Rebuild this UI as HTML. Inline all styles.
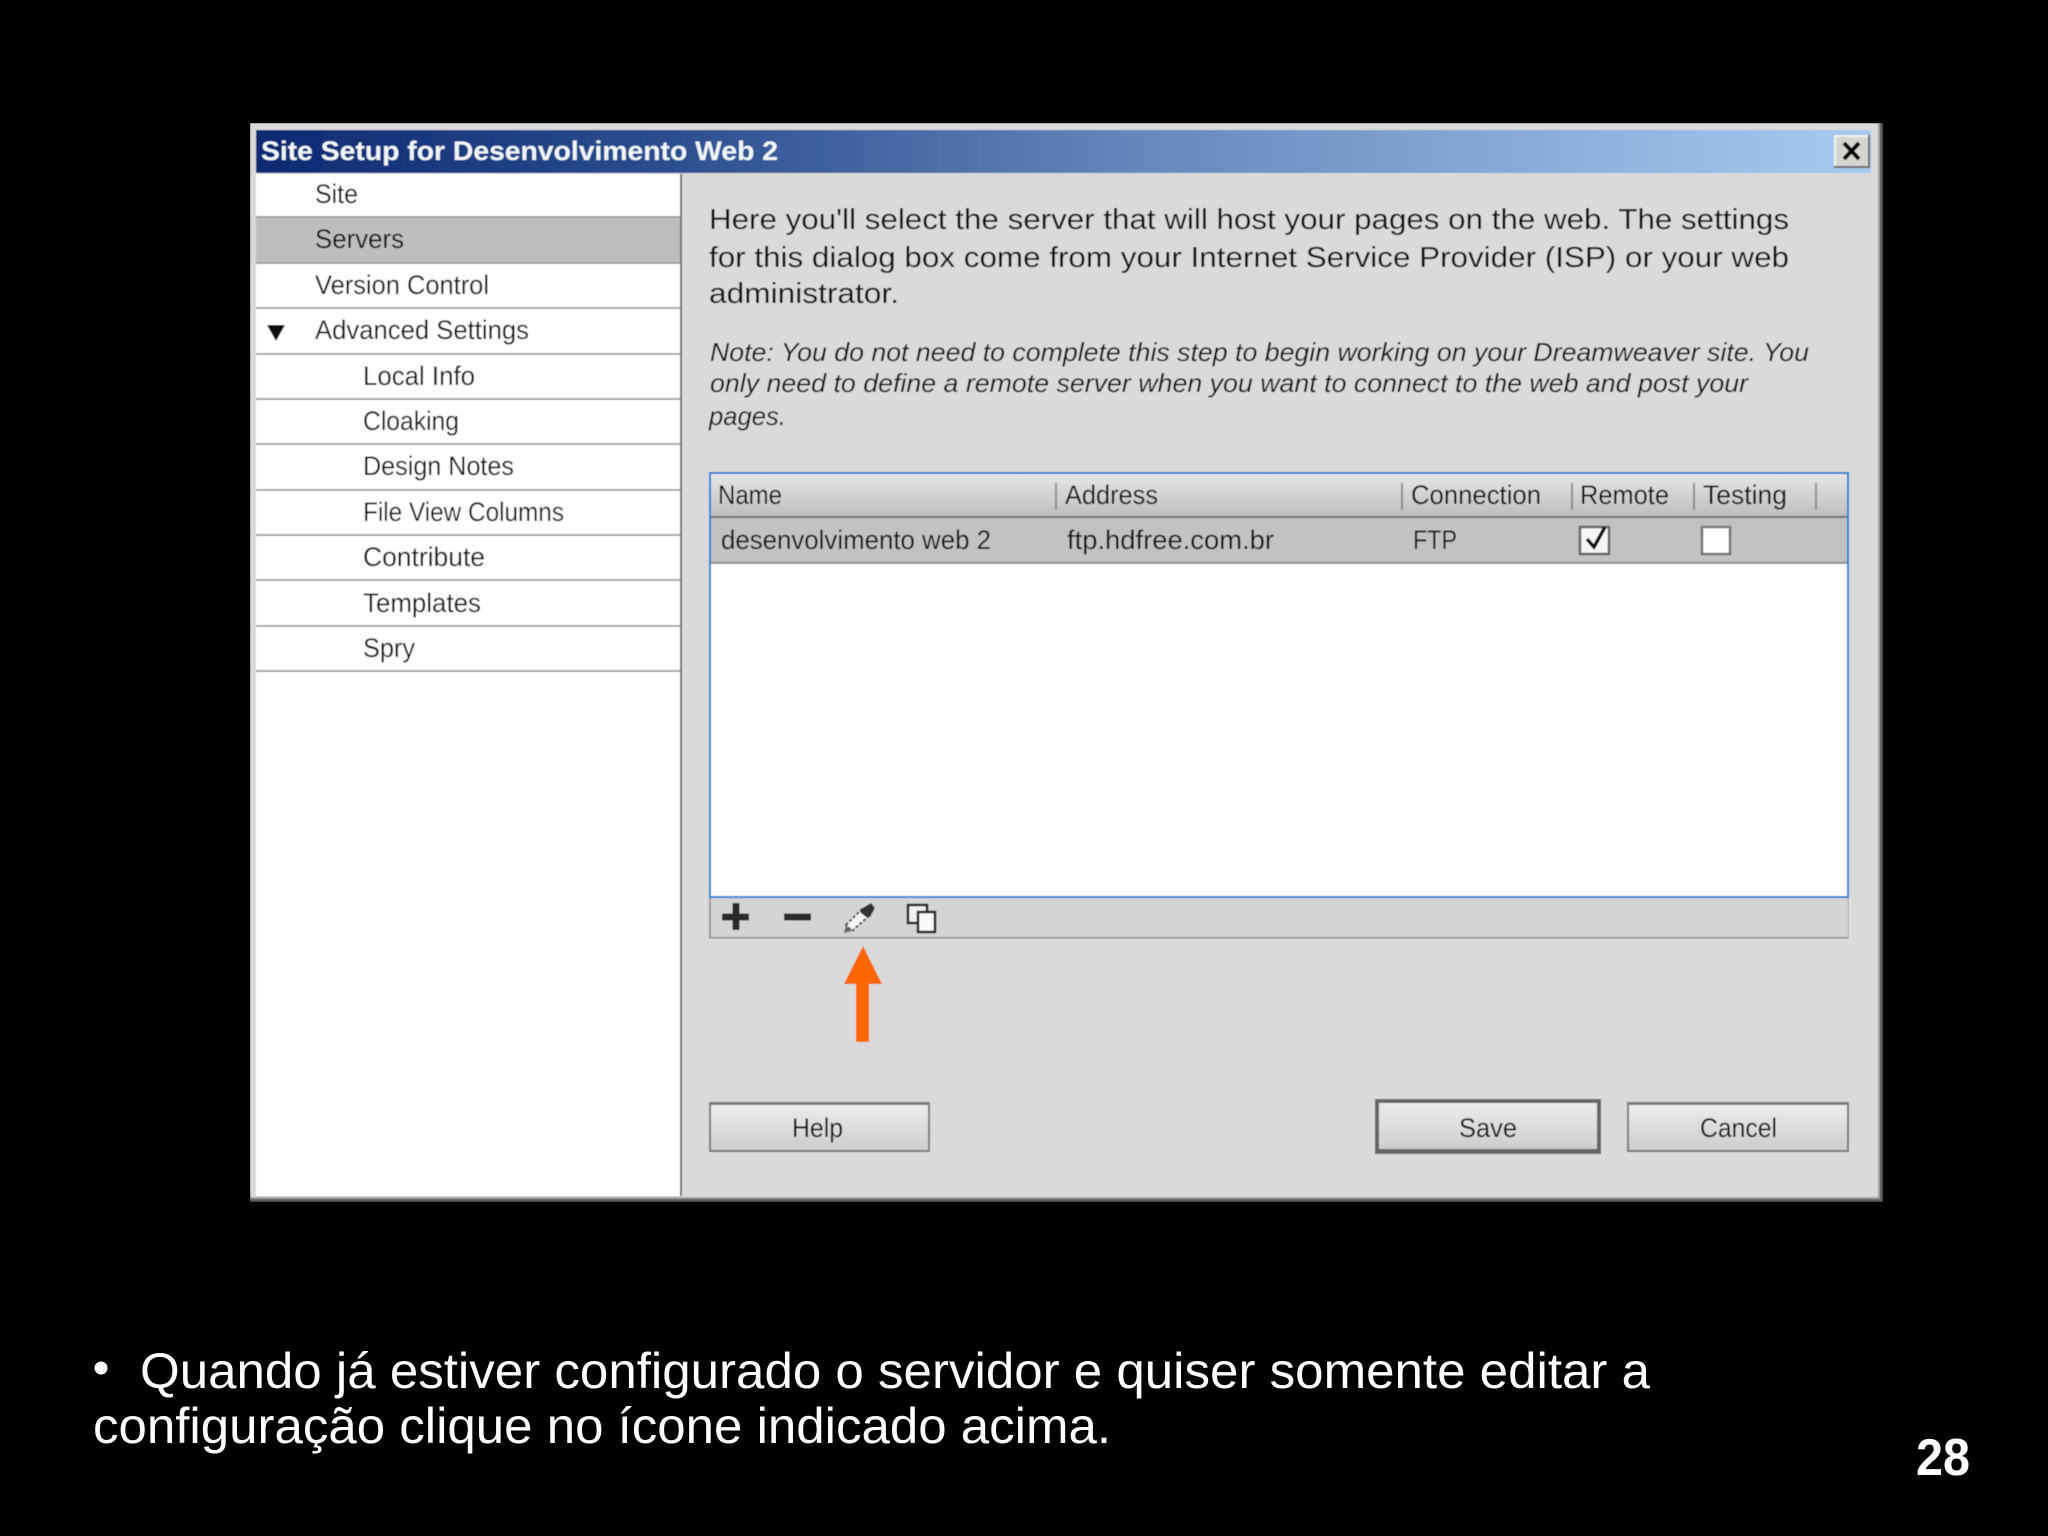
<!DOCTYPE html>
<html lang="pt">
<head>
<meta charset="utf-8">
<title>Site Setup</title>
<style>
html,body{margin:0;padding:0;background:#000;width:2048px;height:1536px;overflow:hidden}
svg{display:block}
text{font-family:"Liberation Sans",sans-serif;fill:#111}
.s{font-size:27px}
.i{font-size:29px}
.n{font-size:26px;font-style:italic}
</style>
</head>
<body>
<svg width="2048" height="1536" viewBox="0 0 2048 1536" xmlns="http://www.w3.org/2000/svg">
<defs>
<linearGradient id="tb" x1="0" x2="1" y1="0" y2="0">
<stop offset="0" stop-color="#0d2a72"/><stop offset=".25" stop-color="#2a4d8f"/><stop offset=".55" stop-color="#6688bd"/><stop offset=".8" stop-color="#8aaedb"/><stop offset="1" stop-color="#a8c9f0"/>
</linearGradient>
<linearGradient id="hd" x1="0" x2="0" y1="0" y2="1">
<stop offset="0" stop-color="#e6e6e6"/><stop offset="1" stop-color="#bdbdbd"/>
</linearGradient>
<linearGradient id="bt" x1="0" x2="0" y1="0" y2="1">
<stop offset="0" stop-color="#ececec"/><stop offset="1" stop-color="#cdcdcd"/>
</linearGradient>
<filter id="soft" x="0" y="0" width="100%" height="100%"><feGaussianBlur stdDeviation="0.5"/></filter>
</defs>
<rect width="2048" height="1536" fill="#000"/>

<g filter="url(#soft)">
<!-- dialog -->
<rect x="250" y="123" width="1633" height="1079" fill="#5a5a5a"/>
<rect x="250" y="123" width="1630" height="1076" fill="#a0a0a0"/>
<rect x="250" y="123" width="1628" height="1074" fill="#dadada"/>
<rect x="256" y="130" width="1615" height="43" fill="url(#tb)"/>
<text x="261" y="160" font-size="27" font-weight="700" style="fill:#f2f6fc" textLength="517" lengthAdjust="spacingAndGlyphs">Site Setup for Desenvolvimento Web 2</text>

<!-- close -->
<rect x="1834" y="135" width="36" height="33" fill="#6a6a6a"/>
<rect x="1834" y="135" width="34" height="31" fill="#f4f2ec"/>
<rect x="1836" y="137" width="32" height="29" fill="#d6d4ce"/>
<path d="M1844 143 L1859 159 M1859 143 L1844 159" stroke="#000" stroke-width="4" fill="none"/>

<!-- sidebar -->
<rect x="256" y="174" width="424" height="1022" fill="#fff"/>
<rect x="256" y="218" width="424" height="45" fill="#bebebe"/>
<g fill="#a2a2a2">
<rect x="256" y="216" width="424" height="2"/>
<rect x="256" y="262" width="424" height="2"/>
<rect x="256" y="307" width="424" height="2"/>
<rect x="256" y="353" width="424" height="2"/>
<rect x="256" y="398" width="424" height="2"/>
<rect x="256" y="443" width="424" height="2"/>
<rect x="256" y="489" width="424" height="2"/>
<rect x="256" y="534" width="424" height="2"/>
<rect x="256" y="579" width="424" height="2"/>
<rect x="256" y="625" width="424" height="2"/>
<rect x="256" y="670" width="424" height="2"/>
</g>
<rect x="680" y="174" width="2" height="1022" fill="#6f6f6f"/>
<path d="M267 325 H285 L276 341 Z" fill="#111"/>

<text class="s" x="315" y="203" textLength="43" lengthAdjust="spacingAndGlyphs">Site</text>
<text class="s" x="315" y="248" textLength="89" lengthAdjust="spacingAndGlyphs">Servers</text>
<text class="s" x="315" y="294" textLength="174" lengthAdjust="spacingAndGlyphs">Version Control</text>
<text class="s" x="315" y="339" textLength="214" lengthAdjust="spacingAndGlyphs">Advanced Settings</text>
<text class="s" x="363" y="385" textLength="112" lengthAdjust="spacingAndGlyphs">Local Info</text>
<text class="s" x="363" y="430" textLength="96" lengthAdjust="spacingAndGlyphs">Cloaking</text>
<text class="s" x="363" y="475" textLength="151" lengthAdjust="spacingAndGlyphs">Design Notes</text>
<text class="s" x="363" y="521" textLength="201" lengthAdjust="spacingAndGlyphs">File View Columns</text>
<text class="s" x="363" y="566" textLength="122" lengthAdjust="spacingAndGlyphs">Contribute</text>
<text class="s" x="363" y="612" textLength="118" lengthAdjust="spacingAndGlyphs">Templates</text>
<text class="s" x="363" y="657" textLength="52" lengthAdjust="spacingAndGlyphs">Spry</text>

<!-- intro -->
<text class="i" x="709" y="229" textLength="1080" lengthAdjust="spacingAndGlyphs">Here you'll select the server that will host your pages on the web. The settings</text>
<text class="i" x="709" y="267" textLength="1080" lengthAdjust="spacingAndGlyphs">for this dialog box come from your Internet Service Provider (ISP) or your web</text>
<text class="i" x="709" y="303" textLength="190" lengthAdjust="spacingAndGlyphs">administrator.</text>
<text class="n" x="710" y="361" textLength="1099" lengthAdjust="spacingAndGlyphs">Note: You do not need to complete this step to begin working on your Dreamweaver site. You</text>
<text class="n" x="710" y="392" textLength="1038" lengthAdjust="spacingAndGlyphs">only need to define a remote server when you want to connect to the web and post your</text>
<text class="n" x="709" y="425" textLength="77" lengthAdjust="spacingAndGlyphs">pages.</text>

<!-- table -->
<rect x="709" y="472" width="1140" height="426" fill="#1b7fd4"/>
<rect x="711" y="474" width="1136" height="422" fill="#fff"/>
<rect x="711" y="474" width="1136" height="43" fill="url(#hd)"/>
<rect x="711" y="516" width="1136" height="2" fill="#6e6e6e"/>
<rect x="711" y="518" width="1136" height="45" fill="#c2c2c2"/>
<rect x="711" y="562" width="1136" height="2" fill="#8f8f8f"/>
<g fill="#8e8e8e">
<rect x="1055" y="483" width="2" height="27"/>
<rect x="1401" y="483" width="2" height="27"/>
<rect x="1571" y="483" width="2" height="27"/>
<rect x="1693" y="483" width="2" height="27"/>
<rect x="1815" y="483" width="2" height="27"/>
</g>
<text class="s" x="718" y="504" textLength="64" lengthAdjust="spacingAndGlyphs">Name</text>
<text class="s" x="1065" y="504" textLength="93" lengthAdjust="spacingAndGlyphs">Address</text>
<text class="s" x="1411" y="504" textLength="130" lengthAdjust="spacingAndGlyphs">Connection</text>
<text class="s" x="1580" y="504" textLength="89" lengthAdjust="spacingAndGlyphs">Remote</text>
<text class="s" x="1703" y="504" textLength="84" lengthAdjust="spacingAndGlyphs">Testing</text>
<text class="s" x="721" y="549" textLength="270" lengthAdjust="spacingAndGlyphs">desenvolvimento web 2</text>
<text class="s" x="1067" y="549" textLength="207" lengthAdjust="spacingAndGlyphs">ftp.hdfree.com.br</text>
<text class="s" x="1413" y="549" textLength="44" lengthAdjust="spacingAndGlyphs">FTP</text>

<rect x="1580" y="527" width="29" height="27" fill="#f6f6f6" stroke="#666" stroke-width="2.5"/>
<path d="M1587 539 L1594 547 L1605 527" fill="none" stroke="#111" stroke-width="3.5"/>
<rect x="1702" y="527" width="28" height="27" fill="#fff" stroke="#777" stroke-width="2.5"/>

<!-- toolbar -->
<rect x="709" y="898" width="1141" height="42" fill="#f0f0f0"/>
<rect x="709" y="898" width="1140" height="41" fill="#9a9a9a"/>
<rect x="711" y="898" width="1137" height="39" fill="#d4d4d4"/>
<path d="M722 917 H749 M736 903 V930" stroke="#2a2a2a" stroke-width="7" fill="none"/>
<path d="M784 917 H811" stroke="#2a2a2a" stroke-width="7" fill="none"/>
<path d="M846 925 L863 908 L870 915 L852 931 Z" fill="#f4f4f4" stroke="#444" stroke-width="2" stroke-dasharray="3 2"/>
<path d="M861 909 L871 903 L875 908 L870 917 L866 917 L860 912 Z" fill="#333"/>
<path d="M844 933 L846 925 L852 931 Z" fill="#666"/>
<rect x="908" y="905" width="19" height="18" fill="#f2f2f2" stroke="#222" stroke-width="2.5"/>
<rect x="918" y="912" width="17" height="20" fill="#fafafa" stroke="#222" stroke-width="2.5"/>

<!-- arrow -->
<path d="M863 946 L882 984 L869 984 L869 1042 L856 1042 L856 984 L844 984 Z" fill="#ff6600"/>

<!-- buttons -->
<rect x="709" y="1102" width="221" height="50" fill="#7a7a7a"/>
<rect x="711" y="1105" width="217" height="45" fill="url(#bt)"/>
<rect x="1375" y="1099" width="226" height="55" fill="#666"/>
<rect x="1379" y="1103" width="218" height="46" fill="url(#bt)"/>
<rect x="1627" y="1102" width="222" height="50" fill="#7a7a7a"/>
<rect x="1629" y="1105" width="218" height="45" fill="url(#bt)"/>
<text class="s" x="792" y="1137" textLength="51" lengthAdjust="spacingAndGlyphs">Help</text>
<text class="s" x="1459" y="1137" textLength="58" lengthAdjust="spacingAndGlyphs">Save</text>
<text class="s" x="1700" y="1137" textLength="77" lengthAdjust="spacingAndGlyphs">Cancel</text>
</g>

<!-- caption -->
<circle cx="101" cy="1368" r="6.5" fill="#fff"/>
<text x="140" y="1388" font-size="50" style="fill:#fff" textLength="1510" lengthAdjust="spacingAndGlyphs">Quando já estiver configurado o servidor e quiser somente editar a</text>
<text x="93" y="1443" font-size="50" style="fill:#fff" textLength="1018" lengthAdjust="spacingAndGlyphs">configuração clique no ícone indicado acima.</text>
<text x="1916" y="1475" font-size="52" font-weight="700" style="fill:#fff" textLength="54" lengthAdjust="spacingAndGlyphs">28</text>
</svg>
</body>
</html>
